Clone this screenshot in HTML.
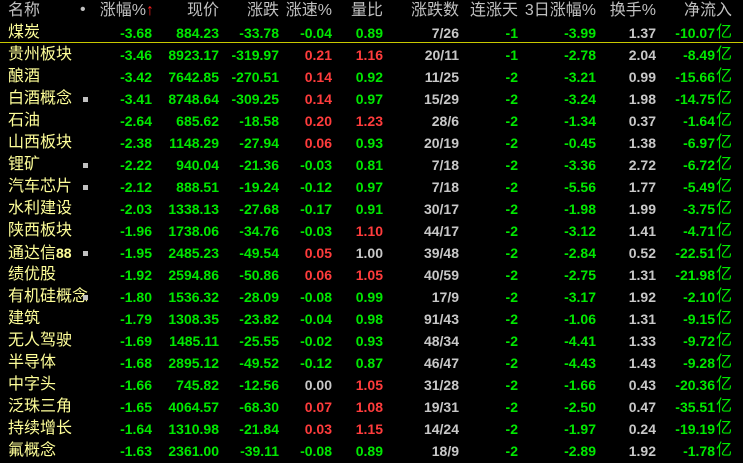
<!DOCTYPE html>
<html><head><meta charset="utf-8"><style>
body{margin:0;background:#000;width:743px;height:463px;overflow:hidden;font-family:"Liberation Sans","Noto Sans CJK SC",sans-serif;}
.r{position:absolute;left:0;width:743px;height:22px;line-height:22px;}
.r span{position:absolute;top:0;white-space:nowrap;font-size:14px;font-weight:bold;}
.n{left:8px;color:#ffff99;font-size:16px!important;font-weight:normal!important;}
.h span{color:#c0c0c0;font-weight:normal;font-size:16px;}
.g{color:#00e800}.d{color:#ff3c3c}.w{color:#c8c8c8}
.a{right:591px}.b{right:524px}.c{right:464px}.e{right:411px}.f{right:360px}
.k{right:284px}.l{right:225px}.m{right:147px}.o{right:87px}.p{right:28px}
.y{right:11px;font-weight:normal!important;font-size:16px!important;color:#00e800}
.dot{position:absolute;left:83px;top:9px;width:5px;height:5px;background:#c0c0c0}
.line{position:absolute;left:0;top:42px;width:743px;height:1px;background:#c8c800}
</style></head><body>
<div class="r h" style="top:0"><span style="left:8px">名称</span><span style="left:80px;top:-1px">•</span><span class="a" style="right:597px">涨幅%</span><span style="left:146px;color:#ff2020">↑</span><span class="b">现价</span><span class="c">涨跌</span><span class="e">涨速%</span><span class="f">量比</span><span class="k">涨跌数</span><span class="l">连涨天</span><span class="m">3日涨幅%</span><span class="o">换手%</span><span class="y" style="color:#c0c0c0">净流入</span></div>
<div class="line"></div>

<div class="r" style="top:22px"><span class="n">煤炭</span><span class="a g">-3.68</span><span class="b g">884.23</span><span class="c g">-33.78</span><span class="e g">-0.04</span><span class="f g">0.89</span><span class="k w">7/26</span><span class="l g">-1</span><span class="m g">-3.99</span><span class="o w">1.37</span><span class="p g">-10.07</span><span class="y">亿</span></div>
<div class="r" style="top:44px"><span class="n">贵州板块</span><span class="a g">-3.46</span><span class="b g">8923.17</span><span class="c g">-319.97</span><span class="e d">0.21</span><span class="f d">1.16</span><span class="k w">20/11</span><span class="l g">-1</span><span class="m g">-2.78</span><span class="o w">2.04</span><span class="p g">-8.49</span><span class="y">亿</span></div>
<div class="r" style="top:66px"><span class="n">酿酒</span><span class="a g">-3.42</span><span class="b g">7642.85</span><span class="c g">-270.51</span><span class="e d">0.14</span><span class="f g">0.92</span><span class="k w">11/25</span><span class="l g">-2</span><span class="m g">-3.21</span><span class="o w">0.99</span><span class="p g">-15.66</span><span class="y">亿</span></div>
<div class="r" style="top:88px"><span class="n">白酒概念</span><i class="dot"></i><span class="a g">-3.41</span><span class="b g">8748.64</span><span class="c g">-309.25</span><span class="e d">0.14</span><span class="f g">0.97</span><span class="k w">15/29</span><span class="l g">-2</span><span class="m g">-3.24</span><span class="o w">1.98</span><span class="p g">-14.75</span><span class="y">亿</span></div>
<div class="r" style="top:110px"><span class="n">石油</span><span class="a g">-2.64</span><span class="b g">685.62</span><span class="c g">-18.58</span><span class="e d">0.20</span><span class="f d">1.23</span><span class="k w">28/6</span><span class="l g">-2</span><span class="m g">-1.34</span><span class="o w">0.37</span><span class="p g">-1.64</span><span class="y">亿</span></div>
<div class="r" style="top:132px"><span class="n">山西板块</span><span class="a g">-2.38</span><span class="b g">1148.29</span><span class="c g">-27.94</span><span class="e d">0.06</span><span class="f g">0.93</span><span class="k w">20/19</span><span class="l g">-2</span><span class="m g">-0.45</span><span class="o w">1.38</span><span class="p g">-6.97</span><span class="y">亿</span></div>
<div class="r" style="top:154px"><span class="n">锂矿</span><i class="dot"></i><span class="a g">-2.22</span><span class="b g">940.04</span><span class="c g">-21.36</span><span class="e g">-0.03</span><span class="f g">0.81</span><span class="k w">7/18</span><span class="l g">-2</span><span class="m g">-3.36</span><span class="o w">2.72</span><span class="p g">-6.72</span><span class="y">亿</span></div>
<div class="r" style="top:176px"><span class="n">汽车芯片</span><i class="dot"></i><span class="a g">-2.12</span><span class="b g">888.51</span><span class="c g">-19.24</span><span class="e g">-0.12</span><span class="f g">0.97</span><span class="k w">7/18</span><span class="l g">-2</span><span class="m g">-5.56</span><span class="o w">1.77</span><span class="p g">-5.49</span><span class="y">亿</span></div>
<div class="r" style="top:198px"><span class="n">水利建设</span><span class="a g">-2.03</span><span class="b g">1338.13</span><span class="c g">-27.68</span><span class="e g">-0.17</span><span class="f g">0.91</span><span class="k w">30/17</span><span class="l g">-2</span><span class="m g">-1.98</span><span class="o w">1.99</span><span class="p g">-3.75</span><span class="y">亿</span></div>
<div class="r" style="top:220px"><span class="n">陕西板块</span><span class="a g">-1.96</span><span class="b g">1738.06</span><span class="c g">-34.76</span><span class="e g">-0.03</span><span class="f d">1.10</span><span class="k w">44/17</span><span class="l g">-2</span><span class="m g">-3.12</span><span class="o w">1.41</span><span class="p g">-4.71</span><span class="y">亿</span></div>
<div class="r" style="top:242px"><span class="n">通达信<b style="font-size:14px">88</b></span><i class="dot"></i><span class="a g">-1.95</span><span class="b g">2485.23</span><span class="c g">-49.54</span><span class="e d">0.05</span><span class="f w">1.00</span><span class="k w">39/48</span><span class="l g">-2</span><span class="m g">-2.84</span><span class="o w">0.52</span><span class="p g">-22.51</span><span class="y">亿</span></div>
<div class="r" style="top:264px"><span class="n">绩优股</span><span class="a g">-1.92</span><span class="b g">2594.86</span><span class="c g">-50.86</span><span class="e d">0.06</span><span class="f d">1.05</span><span class="k w">40/59</span><span class="l g">-2</span><span class="m g">-2.75</span><span class="o w">1.31</span><span class="p g">-21.98</span><span class="y">亿</span></div>
<div class="r" style="top:286px"><span class="n">有机硅概念</span><i class="dot"></i><span class="a g">-1.80</span><span class="b g">1536.32</span><span class="c g">-28.09</span><span class="e g">-0.08</span><span class="f g">0.99</span><span class="k w">17/9</span><span class="l g">-2</span><span class="m g">-3.17</span><span class="o w">1.92</span><span class="p g">-2.10</span><span class="y">亿</span></div>
<div class="r" style="top:308px"><span class="n">建筑</span><span class="a g">-1.79</span><span class="b g">1308.35</span><span class="c g">-23.82</span><span class="e g">-0.04</span><span class="f g">0.98</span><span class="k w">91/43</span><span class="l g">-2</span><span class="m g">-1.06</span><span class="o w">1.31</span><span class="p g">-9.15</span><span class="y">亿</span></div>
<div class="r" style="top:330px"><span class="n">无人驾驶</span><span class="a g">-1.69</span><span class="b g">1485.11</span><span class="c g">-25.55</span><span class="e g">-0.02</span><span class="f g">0.93</span><span class="k w">48/34</span><span class="l g">-2</span><span class="m g">-4.41</span><span class="o w">1.33</span><span class="p g">-9.72</span><span class="y">亿</span></div>
<div class="r" style="top:352px"><span class="n">半导体</span><span class="a g">-1.68</span><span class="b g">2895.12</span><span class="c g">-49.52</span><span class="e g">-0.12</span><span class="f g">0.87</span><span class="k w">46/47</span><span class="l g">-2</span><span class="m g">-4.43</span><span class="o w">1.43</span><span class="p g">-9.28</span><span class="y">亿</span></div>
<div class="r" style="top:374px"><span class="n">中字头</span><span class="a g">-1.66</span><span class="b g">745.82</span><span class="c g">-12.56</span><span class="e w">0.00</span><span class="f d">1.05</span><span class="k w">31/28</span><span class="l g">-2</span><span class="m g">-1.66</span><span class="o w">0.43</span><span class="p g">-20.36</span><span class="y">亿</span></div>
<div class="r" style="top:396px"><span class="n">泛珠三角</span><span class="a g">-1.65</span><span class="b g">4064.57</span><span class="c g">-68.30</span><span class="e d">0.07</span><span class="f d">1.08</span><span class="k w">19/31</span><span class="l g">-2</span><span class="m g">-2.50</span><span class="o w">0.47</span><span class="p g">-35.51</span><span class="y">亿</span></div>
<div class="r" style="top:418px"><span class="n">持续增长</span><span class="a g">-1.64</span><span class="b g">1310.98</span><span class="c g">-21.84</span><span class="e d">0.03</span><span class="f d">1.15</span><span class="k w">14/24</span><span class="l g">-2</span><span class="m g">-1.97</span><span class="o w">0.24</span><span class="p g">-19.19</span><span class="y">亿</span></div>
<div class="r" style="top:440px"><span class="n">氟概念</span><span class="a g">-1.63</span><span class="b g">2361.00</span><span class="c g">-39.11</span><span class="e g">-0.08</span><span class="f g">0.89</span><span class="k w">18/9</span><span class="l g">-2</span><span class="m g">-2.89</span><span class="o w">1.92</span><span class="p g">-1.78</span><span class="y">亿</span></div>
</body></html>
